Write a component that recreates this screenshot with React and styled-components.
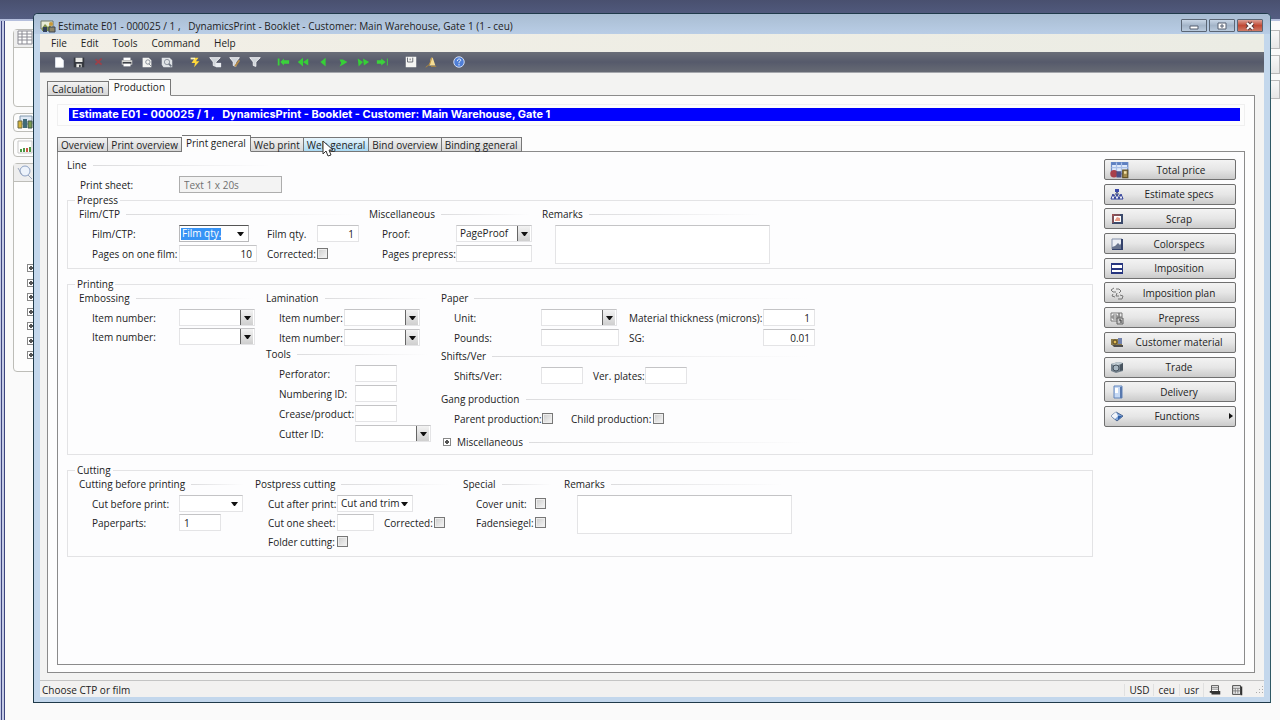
import React, { useId } from 'react';
import styled, { createGlobalStyle, css } from 'styled-components';

const MENUS = ['File', 'Edit', 'Tools', 'Command', 'Help'];

const TOOLS = [
  ['new', 'save', 'delete'],
  ['print', 'preview', 'find'],
  ['flash', 'filterSave', 'filterEdit', 'filter'],
  ['first', 'fastBack', 'back', 'forward', 'fastForward', 'last'],
  ['note', 'alert'],
  ['help'],
];

const ACTIONS = [
  ['Total price', 'price'],
  ['Estimate specs', 'tree'],
  ['Scrap', 'scrap'],
  ['Colorspecs', 'color'],
  ['Imposition', 'imposition'],
  ['Imposition plan', 'plan'],
  ['Prepress', 'prepress'],
  ['Customer material', 'material'],
  ['Trade', 'trade'],
  ['Delivery', 'delivery'],
  ['Functions', 'functions'],
];

const TABS = [
  'Overview',
  'Print overview',
  'Print general',
  'Web print',
  'Web general',
  'Bind overview',
  'Binding general',
];

const ICONS = {
  app: (
    <>
      <path d="M1 3h12v8H1z" fill="#e9ecd8" stroke="#6d7568" />
      <path d="M2 10l3-4 3 3 2-2 2 4v2H2z" fill="#7f8f4c" />
      <circle cx="11" cy="6" r="2" fill="#c79a3c" />
      <path d="M3 9h4v5H3z" fill="#33425c" />
      <path d="M9 9h6v5H9z" fill="#8d8468" stroke="#3d4654" />
    </>
  ),
  new: <path d="M4 3h6l3 3v8H4z" fill="#fff" stroke="#dfe5ee" />,
  save: (
    <>
      <path d="M2 3h12v11H2z" fill="#35383f" />
      <path d="M4 3h8v5H4zM5 10h6v4H5z" fill="#e9e9e6" />
      <path d="M8 11h2v3H8z" fill="#35383f" />
    </>
  ),
  delete: <path d="M4 5l7 6M11 4l-7 7" stroke="#9e4048" strokeWidth="2" />,
  print: (
    <>
      <path d="M4 3h8v3H4z" fill="#fff" />
      <path d="M2 6h12v5H2z" fill="#d6d6d2" />
      <path d="M3 8h10v2H3z" fill="#3e4148" />
      <path d="M4 10h8v3H4z" fill="#fff" />
    </>
  ),
  preview: (
    <>
      <path d="M3 3h7l3 3v8H3z" fill="#f4f4f2" />
      <circle cx="9" cy="8" r="2.5" fill="none" stroke="#7d848e" />
      <path d="M10 10l3 3" stroke="#7d848e" />
    </>
  ),
  find: (
    <>
      <path d="M2 3h9l3 3v8H4l-2-3z" fill="#dfe2e6" />
      <circle cx="8" cy="8" r="3" fill="none" stroke="#868d98" />
      <path d="M10 10l3 3" stroke="#6f7785" strokeWidth="2" />
    </>
  ),
  flash: (
    <>
      <path d="M8 3h4L9 7h4l-6 7 1-5H4z" fill="#ffd83a" />
      <path d="M3 4h5" stroke="#fff6bd" strokeWidth="2" />
    </>
  ),
  filter: <path d="M2 3h12l-5 5v5l-3-1V8z" fill="#cfd4da" stroke="#f3f4f6" />,
  filterSave: (
    <>
      <path d="M2 3h12l-5 5v5l-3-1V8z" fill="#cfd4da" stroke="#f3f4f6" />
      <path d="M9 9h6v5H9z" fill="#e9ecf1" />
    </>
  ),
  filterEdit: (
    <>
      <path d="M2 3h11l-4 5v5l-3-1V8z" fill="#cfd4da" stroke="#f3f4f6" />
      <path d="M13 6l-5 7" stroke="#b58b4a" strokeWidth="2" />
    </>
  ),
  first: (
    <>
      <path d="M3 4v8" stroke="#3bd23b" strokeWidth="2" />
      <path d="M5 8l4-4v2h6v4H9v2z" fill="#3bd23b" />
    </>
  ),
  fastBack: <path d="M8 3v10L2 8zM14 4v8L8 8z" fill="#36cf37" />,
  back: <path d="M11 3v10L5 8z" fill="#36cf37" />,
  forward: <path d="M4 5h4l5 3-5 3-4 2 2-4z" fill="#36cf37" />,
  fastForward: <path d="M2 4l6 4-5 5zM8 4l7 4-6 4z" fill="#36cf37" />,
  last: (
    <>
      <path d="M1 6h5V4l5 4-5 4v-2H1z" fill="#3bd23b" />
      <path d="M13 4v8" stroke="#3bd23b" />
    </>
  ),
  note: (
    <>
      <path d="M2 2h12v12H2z" fill="#f5f5f3" />
      <path d="M4 3v5h6V3M7 4v2" fill="none" stroke="#5b5f68" />
    </>
  ),
  alert: (
    <>
      <path d="M8 3h2l3 9H6z" fill="#f4dc94" />
      <path d="M6 12l3-9M2 14l5-4M8 13h6" stroke="#b28a3c" />
    </>
  ),
  help: (
    <>
      <circle cx="8" cy="8" r="6" fill="#4f7ed6" stroke="#dfe8fb" />
      <path
        d="M6 7c0-3 4-3 4-1 0 1-2 1-2 3M8 10v2"
        fill="none"
        stroke="#fff"
      />
    </>
  ),
  price: (
    <>
      <path d="M2 2h13v9H2z" fill="#dfe9fa" stroke="#6d8dca" />
      <path d="M2 3h13" stroke="#5d7fc0" strokeWidth="2" />
      <path d="M2 6h13M6 2v8M10 2v8" stroke="#a9c0e8" />
      <circle cx="4" cy="11" r="3" fill="#a8404a" />
      <path d="M6 9h4v5H6z" fill="#4a4f86" />
      <path d="M11 8h4v6h-4z" fill="#a48b4c" stroke="#64552b" />
      <path d="M12 9h2v2h-2z" fill="#f3e2a9" />
    </>
  ),
  tree: (
    <>
      <path d="M8 5v4M8 6l-3 4M8 6l3 4" stroke="#555e86" />
      <path d="M6 3h4v3H6z" fill="#3947a8" />
      <path
        d="M4 8l2 5H2zM8 8l2 5H6zM12 8l2 5h-4z"
        fill="#fff"
        stroke="#2b3a96"
      />
    </>
  ),
  scrap: (
    <>
      <path d="M4 4h9v8H4z" fill="#fff" stroke="#3c4a6b" strokeWidth="2" />
      <path d="M6 9l2-3 3 1v3H6z" fill="#e79b86" />
      <path d="M4 3v9M3 4h8" stroke="#c2564a" />
    </>
  ),
  color: (
    <>
      <path d="M3 3h10v10H3z" fill="#eceff5" stroke="#8390aa" />
      <path d="M3 13v-2l3-1 3-3 2 2 2-3v7z" fill="#68748e" />
      <path d="M12 3h2v11h-2zM3 13h11v1H3z" fill="#33416b" />
    </>
  ),
  imposition: (
    <>
      <path d="M2 3h12v11H2z" fill="#26357f" />
      <path d="M3 5h10v3H3zM3 10h10v2H3z" fill="#fff" />
    </>
  ),
  plan: (
    <path
      d="M5 3L2 5l2 2h3M7 4h3l2 2-2 2M4 9L3 11l3 1M8 8l-1 3h3M11 10l3 1-1 3h-4"
      fill="none"
      stroke="#777"
    />
  ),
  prepress: (
    <>
      <path d="M2 3h8v8H2z" fill="#f7f7f7" stroke="#777" />
      <path d="M4 5h4v4H4zM2 7h8M10 3h3v4h-3z" fill="none" stroke="#777" />
      <path d="M8 8h6v6H8z" fill="#c9c9c9" stroke="#606060" />
      <path d="M10 10h2v3" fill="none" stroke="#333" />
    </>
  ),
  material: (
    <>
      <path d="M2 5h11v6H2z" fill="#8b7a49" />
      <circle cx="6" cy="8" r="2" fill="#e2bb54" stroke="#56461f" />
      <path d="M9 4h4v6H9z" fill="#7282ad" />
      <path d="M3 11h11v2H5z" fill="#4d4d4d" />
    </>
  ),
  trade: (
    <>
      <path d="M2 5l7-2 5 1v8l-7 2-5-2z" fill="#75828d" />
      <path d="M2 5l5 2 7-3-5-1z" fill="#c0cbd2" />
      <path d="M11 6v6l3-1V4z" fill="#48545f" />
      <circle cx="7" cy="9" r="3" fill="#a9b8c3" stroke="#48545f" />
    </>
  ),
  delivery: (
    <>
      <path d="M5 2h8v12H5z" fill="#c6d9f4" stroke="#6184bb" />
      <path d="M11 3h2v11h-2z" fill="#5878ae" />
      <path d="M6 4h3v5H6z" fill="#fff" />
    </>
  ),
  functions: (
    <>
      <path d="M2 8l5-4 7 4-6 5z" fill="#7fa4d8" stroke="#4b6792" />
      <path d="M2 8l5-4 2 4-3 3z" fill="#f2f5fa" />
      <path d="M9 8h4l-4 4z" fill="#2f5fa8" />
    </>
  ),
  stack: (
    <>
      <path d="M4 3h8v8H4z" fill="#fff" stroke="#444" />
      <path d="M4 5h8M4 7h8" stroke="#777" />
      <path d="M2 10h12M4 12h10" stroke="#333" strokeWidth="2" />
    </>
  ),
  grid: (
    <>
      <path d="M3 3h9v10H3z" fill="#eee" stroke="#333" />
      <path d="M3 6h9M3 9h9M6 6v6M9 6v6" stroke="#777" />
      <path d="M13 4v10" stroke="#333" strokeWidth="2" />
    </>
  ),
};

const Icon = ({ name, size = 16 }) => (
  <svg width={size} height={size} viewBox="0 0 16 16" fill="none" aria-hidden>
    {ICONS[name]}
  </svg>
);

const Arrow = () => (
  <ArrowBox>
    <svg width="7" height="4" viewBox="0 0 7 4" aria-hidden>
      <path d="M0 0h7L4 4H3z" fill="#111" />
    </svg>
  </ArrowBox>
);

const TextField = ({ label, value, width, right, disabled }) => {
  const id = useId();
  return (
    <>
      <Label htmlFor={id}>{label}</Label>
      <Input
        id={id}
        defaultValue={value}
        disabled={disabled}
        $width={width}
        $right={right}
      />
    </>
  );
};

const SelectField = ({ label, value = '', width = 76, combo, active }) => {
  const id = useId();
  return (
    <>
      <Label htmlFor={id}>{label}</Label>
      <SelectBox $width={width} $combo={combo} $active={active}>
        <Select id={id} $active={active}>
          <option>{value}</option>
        </Select>
        <Arrow />
      </SelectBox>
    </>
  );
};

const CheckField = ({ label }) => {
  const id = useId();
  return (
    <>
      <Label htmlFor={id}>{label}</Label>
      <Check id={id} type="checkbox" />
    </>
  );
};

const Section = ({ title, tight, children }) => (
  <SectionBox>
    <SubHead>
      <span>{title}</span>
    </SubHead>
    <Rows $tight={tight}>{children}</Rows>
  </SectionBox>
);

const Remarks = () => {
  const id = useId();
  return (
    <SectionBox>
      <SubHead>
        <label htmlFor={id}>Remarks</label>
      </SubHead>
      <Rows>
        <TextArea id={id} />
      </Rows>
    </SectionBox>
  );
};

const PrepressGroup = () => (
  <Group>
    <Legend>Prepress</Legend>
    <Columns $cols="290px 173px 230px">
      <Section title="Film/CTP">
        <Row $cols="87px 88px 50px 42px">
          <SelectField label="Film/CTP:" value="Film qty." width={70} combo active />
          <TextField label="Film qty." value="1" width={42} right />
        </Row>
        <Row $cols="87px 88px 50px 42px">
          <TextField label="Pages on one film:" value="10" width={78} right />
          <CheckField label="Corrected:" />
        </Row>
      </Section>
      <Section title="Miscellaneous">
        <Row $cols="74px 76px">
          <SelectField label="Proof:" value="PageProof" />
        </Row>
        <Row $cols="74px 76px">
          <TextField label="Pages prepress:" width={76} />
        </Row>
      </Section>
      <Remarks />
    </Columns>
  </Group>
);

const PrintingGroup = () => (
  <Group>
    <Legend>Printing</Legend>
    <Columns $cols="187px 175px 380px">
      <Section title="Embossing" tight>
        <Row $cols="87px 76px">
          <SelectField label="Item number:" />
        </Row>
        <Row $cols="87px 76px">
          <SelectField label="Item number:" />
        </Row>
      </Section>
      <Stack $gap={2}>
        <Section title="Lamination">
          <Row $cols="65px 76px">
            <SelectField label="Item number:" />
          </Row>
          <Row $cols="65px 76px">
            <SelectField label="Item number:" />
          </Row>
        </Section>
        <Section title="Tools">
          <Row $cols="76px 76px">
            <TextField label="Perforator:" width={42} />
          </Row>
          <Row $cols="76px 76px">
            <TextField label="Numbering ID:" width={42} />
          </Row>
          <Row $cols="76px 76px">
            <TextField label="Crease/product:" width={42} />
          </Row>
          <Row $cols="76px 76px">
            <SelectField label="Cutter ID:" />
          </Row>
        </Section>
      </Stack>
      <Stack $gap={9}>
        <Stack $gap={4}>
          <Section title="Paper">
            <Row $cols="87px 88px 134px 52px">
              <SelectField label="Unit:" />
              <TextField
                label="Material thickness (microns):"
                value="1"
                width={52}
                right
              />
            </Row>
            <Row $cols="87px 88px 134px 52px">
              <TextField label="Pounds:" width={78} />
              <TextField label="SG:" value="0.01" width={52} right />
            </Row>
          </Section>
          <Section title="Shifts/Ver">
            <Row $cols="87px 52px 52px 42px">
              <TextField label="Shifts/Ver:" width={42} />
              <TextField label="Ver. plates:" width={42} />
            </Row>
          </Section>
        </Stack>
        <Section title="Gang production">
          <Row $cols="88px 29px 82px 42px">
            <CheckField label="Parent production:" />
            <CheckField label="Child production:" />
          </Row>
        </Section>
        <SubHead>
          <Expander type="button" aria-label="Expand">
            <PlusBox />
          </Expander>
          <span>Miscellaneous</span>
        </SubHead>
      </Stack>
    </Columns>
  </Group>
);

const CuttingGroup = () => (
  <Group>
    <Legend>Cutting</Legend>
    <Columns $cols="176px 208px 101px 230px">
      <Section title="Cutting before printing" tight>
        <Row $cols="87px 64px">
          <SelectField label="Cut before print:" width={64} combo />
        </Row>
        <Row $cols="87px 64px">
          <TextField label="Paperparts:" value="1" width={42} />
        </Row>
      </Section>
      <Section title="Postpress cutting" tight>
        <Row $cols="69px 76px">
          <SelectField label="Cut after print:" value="Cut and trim" combo />
        </Row>
        <Row $cols="69px 47px 50px 12px">
          <TextField label="Cut one sheet:" width={37} />
          <CheckField label="Corrected:" />
        </Row>
        <Row $cols="69px 12px">
          <CheckField label="Folder cutting:" />
        </Row>
      </Section>
      <Section title="Special" tight>
        <Row $cols="59px 12px">
          <CheckField label="Cover unit:" />
        </Row>
        <Row $cols="59px 12px">
          <CheckField label="Fadensiegel:" />
        </Row>
      </Section>
      <Remarks />
    </Columns>
  </Group>
);

const BackWindow = () => (
  <Back>
    <BackTop />
    <BackBody>
      <BackRail />
      <BackNav>
        <BackCard $height={78}>
          <BackCardHead>
            <svg width="16" height="16" viewBox="0 0 16 16" aria-hidden>
              <path
                d="M1 1h14v13H1zM1 4h14M1 7h14M1 10h14M5 1v13M10 1v13"
                fill="#fff"
                stroke="#8b8b94"
              />
            </svg>
          </BackCardHead>
        </BackCard>
        <BackCard $height={19}>
          <svg width="16" height="16" viewBox="0 0 16 16" aria-hidden>
            <path d="M3 2h12v8H3z" fill="#dfe9f5" stroke="#8298ad" />
            <path d="M1 7h4v7H1z" fill="#d7b43c" stroke="#6b6a45" />
            <path d="M6 5h4v9H6z" fill="#3f6a78" />
            <path d="M11 7h4v7h-4z" fill="#7a9a4e" stroke="#44584e" />
          </svg>
        </BackCard>
        <BackCard $height={19}>
          <svg width="16" height="16" viewBox="0 0 16 16" aria-hidden>
            <path d="M1 2h14v12H1z" fill="#fff" stroke="#c9c9c9" />
            <path d="M4 13v-3M7 13V9M13 13V8" stroke="#4d9a45" strokeWidth="2" />
            <path d="M10 13v-4" stroke="#c95846" strokeWidth="2" />
          </svg>
        </BackCard>
        <BackCard $height={209}>
          <BackCardHead>
            <svg width="16" height="16" viewBox="0 0 16 16" aria-hidden>
              <circle cx="8" cy="7" r="5" fill="#edf3fb" stroke="#8ea2c4" />
              <path d="M11 11l4 4M1 4l4 7" stroke="#9ba7bd" />
            </svg>
          </BackCardHead>
          <BackTree>
            {[1, 2, 3, 4, 5, 6, 7].map((n) => (
              <PlusBox key={n} />
            ))}
          </BackTree>
        </BackCard>
      </BackNav>
      <BackEdge>
        <BackButton />
        <BackButton />
        <BackButton />
      </BackEdge>
    </BackBody>
  </Back>
);

export default function App() {
  return (
    <Desktop>
      <GlobalStyle />
      <BackWindow />
      <Window>
        <TitleBar>
          <Icon name="app" />
          <Title>
            {
              'Estimate E01 - 000025 / 1 ,   DynamicsPrint - Booklet - Customer: Main Warehouse, Gate 1 (1 - ceu)'
            }
          </Title>
          <Caption type="button" aria-label="Minimize">
            <svg width="24" height="12" viewBox="0 0 24 12">
              <path d="M8 6h8v3H8z" fill="#fff" stroke="#555f70" />
            </svg>
          </Caption>
          <Caption type="button" aria-label="Maximize">
            <svg width="24" height="12" viewBox="0 0 24 12">
              <path d="M8 3h8v6H8z" fill="#fff" stroke="#555f70" />
              <path d="M11 5h2v2h-2z" fill="#fff" stroke="#555f70" />
            </svg>
          </Caption>
          <Caption type="button" aria-label="Close" $close>
            <svg width="24" height="12" viewBox="0 0 24 12">
              <path d="M9 3l6 6M15 3L9 9" stroke="#5a3a3a" strokeWidth="4" />
              <path d="M9 3l6 6M15 3L9 9" stroke="#fff" strokeWidth="2" />
            </svg>
          </Caption>
        </TitleBar>
        <MenuBar>
          {MENUS.map((menu) => (
            <MenuItem key={menu} type="button">
              {menu}
            </MenuItem>
          ))}
        </MenuBar>
        <ToolBar>
          {TOOLS.map((group) => (
            <ToolGroup key={group[0]}>
              {group.map((tool) => (
                <ToolButton key={tool} type="button" aria-label={tool}>
                  <Icon name={tool} size={14} />
                </ToolButton>
              ))}
            </ToolGroup>
          ))}
        </ToolBar>
        <Client>
          <TabStrip role="tablist">
            <Tab type="button" role="tab">
              Calculation
            </Tab>
            <Tab type="button" role="tab" $selected>
              Production
            </Tab>
          </TabStrip>
          <OuterPanel>
            <Banner>
              <BannerText>
                {
                  'Estimate E01 - 000025 / 1 ,   DynamicsPrint - Booklet - Customer: Main Warehouse, Gate 1'
                }
              </BannerText>
            </Banner>
            <TabStrip role="tablist">
              {TABS.map((tab) => (
                <Tab
                  key={tab}
                  type="button"
                  role="tab"
                  $narrow
                  $selected={tab === 'Print general'}
                  $hover={tab === 'Web general'}
                >
                  {tab}
                  {tab === 'Web general' && (
                    <Pointer width="12" height="18" viewBox="0 0 12 18">
                      <path
                        d="M1 1v13l3-3 2 5 3-1-2-5h4z"
                        fill="#fff"
                        stroke="#333"
                      />
                    </Pointer>
                  )}
                </Tab>
              ))}
            </TabStrip>
            <InnerPanel>
              <Form>
                <LineSection>
                  <Section title="Line">
                    <Row $cols="99px 103px">
                      <TextField
                        label="Print sheet:"
                        value="Text 1 x 20s"
                        width={103}
                        disabled
                      />
                    </Row>
                  </Section>
                </LineSection>
                <PrepressGroup />
                <PrintingGroup />
                <CuttingGroup />
              </Form>
              <Actions>
                {ACTIONS.map(([label, icon]) => (
                  <ActionButton key={label} type="button">
                    <Icon name={icon} size={icon === 'price' ? 20 : 16} />
                    <span>{label}</span>
                    {label === 'Functions' && (
                      <svg width="4" height="6" viewBox="0 0 4 6" aria-hidden>
                        <path d="M0 0l4 3-4 3z" fill="#111" />
                      </svg>
                    )}
                  </ActionButton>
                ))}
              </Actions>
            </InnerPanel>
          </OuterPanel>
        </Client>
        <StatusBar>
          <StatusText>Choose CTP or film</StatusText>
          <StatusCell>USD</StatusCell>
          <StatusCell>ceu</StatusCell>
          <StatusCell>usr</StatusCell>
          <StatusCell>
            <Icon name="stack" size={14} />
          </StatusCell>
          <StatusIcon>
            <Icon name="grid" size={14} />
          </StatusIcon>
          <svg width="8" height="8" viewBox="0 0 8 8" aria-hidden>
            <path
              d="M6 0h1v1H6zM3 3h1v1H3zM6 3h1v1H6zM0 6h1v1H0zM3 6h1v1H3zM6 6h1v1H6z"
              fill="#aaa"
            />
          </svg>
        </StatusBar>
      </Window>
    </Desktop>
  );
}

const GlobalStyle = createGlobalStyle`
  * {
    box-sizing: border-box;
  }
  body {
    margin: 0;
    background: #fafafa;
  }
  body, button, input, select, textarea {
    font-family: 'Open Sans', 'Noto Sans', sans-serif;
    font-size: 10px;
    line-height: 12px;
    color: #222;
  }
  svg {
    display: block;
    flex: none;
  }
`;

const Desktop = styled.div`
  position: relative;
  display: flex;
  min-height: 100vh;
`;

/* window behind */
const Back = styled.div`
  flex: 1;
  display: flex;
  flex-direction: column;
`;
const BackTop = styled.div`
  height: 21px;
  background: linear-gradient(#49506f, #545d82);
  border-bottom: 2px solid #b5bfdd;
`;
const BackBody = styled.div`
  flex: 1;
  display: flex;
  background: #fafafa;
`;
const BackRail = styled.div`
  width: 5px;
  background: linear-gradient(
    90deg,
    #c5cbe6 1px,
    #3e4680 1px 2px,
    #c5cbe6 2px 4px,
    #3e4680 4px
  );
`;
const BackNav = styled.div`
  width: 36px;
  padding: 8px 0 0 8px;
  display: flex;
  flex-direction: column;
  gap: 6px;
`;
const BackCard = styled.div`
  height: ${(props) => props.$height}px;
  padding-left: 3px;
  background: #fdfdfd;
  border: 1px solid #bdbdb8;
  border-radius: 4px;
`;
const BackCardHead = styled.div`
  height: 18px;
  margin-left: -3px;
  padding-left: 3px;
  background: #eee;
  border-bottom: 1px solid #bdbdb8;
`;
const BackTree = styled.div`
  display: flex;
  flex-direction: column;
  justify-content: space-between;
  height: 177px;
  padding: 82px 0 0 10px;
`;
const BackEdge = styled.div`
  flex: 1;
  display: flex;
  flex-direction: column;
  gap: 6px;
  padding-top: 9px;
`;
const BackButton = styled.div`
  height: 19px;
  background: linear-gradient(#f8f8f8, #e6e6e6);
  border: 1px solid #b9b9b9;
`;
const PlusBox = styled.span`
  display: block;
  width: 8px;
  height: 8px;
  border: 1px solid #888;
  background:
    linear-gradient(#555, #555) center / 4px 2px no-repeat,
    linear-gradient(#555, #555) center / 2px 4px no-repeat,
    #fff;
`;

/* main window */
const Window = styled.main`
  position: absolute;
  top: 13px;
  right: 9px;
  bottom: 17px;
  left: 33px;
  display: flex;
  flex-direction: column;
  padding: 0 6px 5px;
  background: #c3d7ec;
  border: 1px solid #1f3a4a;
  border-right-color: #2f5965;
  border-radius: 5px 5px 0 0;
`;
const TitleBar = styled.header`
  display: flex;
  align-items: center;
  gap: 2px;
  height: 20px;
  margin: 0 -6px;
  padding: 3px 7px 0 6px;
  background: linear-gradient(#a9bdd2, #b9cde6);
  border-radius: 4px 4px 0 0;
`;
const Title = styled.div`
  flex: 1;
  white-space: pre;
`;
const Caption = styled.button`
  width: 26px;
  height: 13px;
  padding: 0;
  border: 1px solid #5b6675;
  border-radius: 1px;
  background: ${(props) =>
    props.$close
      ? 'linear-gradient(#dba095, #c14a35 50%, #cf7a66)'
      : 'linear-gradient(#c8d6e6, #a3b4c8 50%, #b9cadd)'};
`;
const MenuBar = styled.nav`
  display: flex;
  height: 18px;
  padding-left: 4px;
  background: linear-gradient(90deg, #f2efe6, #ebece4);
`;
const MenuItem = styled.button`
  padding: 0 7px;
  border: 0;
  background: none;
`;
const ToolBar = styled.div`
  display: flex;
  gap: 8px;
  height: 21px;
  padding-left: 9px;
  background: linear-gradient(#6a6e78, #565a6b 50%, #666a74);
  border-bottom: 1px solid #a5a7ad;
`;
const ToolGroup = styled.div`
  display: flex;
`;
const ToolButton = styled.button`
  display: flex;
  align-items: center;
  justify-content: center;
  width: 20px;
  padding: 0;
  border: 0;
  background: none;
`;
const Client = styled.section`
  flex: 1;
  display: flex;
  flex-direction: column;
  padding: 6px 9px 7px 7px;
  background: #f3f3f2;
`;
const TabStrip = styled.div`
  display: flex;
  align-items: flex-end;
  height: 17px;
  margin-bottom: -1px;
`;
const Tab = styled.button`
  position: relative;
  height: 15px;
  padding: 0 ${(props) => (props.$narrow ? 3 : 4)}px;
  border: 1px solid #777;
  background: linear-gradient(#f3f3f3, #d6d6d6);

  & + & {
    border-left: 0;
  }

  ${(props) =>
    props.$hover &&
    css`
      background: linear-gradient(#e9f6fd, #a9d9f3);
    `}

  ${(props) =>
    props.$selected &&
    css`
      height: 17px;
      padding: 0 ${props.$narrow ? 4 : 5}px 2px;
      background: #fdfdfd;
      border-bottom-color: #fdfdfd;
      z-index: 1;
    `}
`;
const Pointer = styled.svg`
  position: absolute;
  top: 2px;
  left: 18px;
  z-index: 2;
`;
const OuterPanel = styled.div`
  flex: 1;
  display: flex;
  flex-direction: column;
  padding: 8px 9px 7px;
  background: #fdfdfd;
  border: 1px solid #8b8b8b;
`;
const Banner = styled.div`
  margin-bottom: 9px;
  padding: 3px 4px 4px 11px;
  border: 1px solid #f0f0f0;
`;
const BannerText = styled.h1`
  margin: 0;
  padding-left: 3px;
  background: #0000fe;
  color: #fff;
  font: bold 11px/13px Inter, Arial, sans-serif;
  white-space: pre;
`;
const InnerPanel = styled.div`
  flex: 1;
  display: flex;
  justify-content: space-between;
  gap: 11px;
  padding: 7px 8px 0 9px;
  background: #fdfdfe;
  border: 1px solid #8b8b8b;
`;
const Form = styled.form`
  flex: 1;
  display: flex;
  flex-direction: column;
`;
const LineSection = styled.div`
  width: 216px;
  margin-bottom: 1px;
`;
const Group = styled.fieldset`
  min-width: 0;
  margin: 0 0 9px;
  padding: 2px 0 6px 11px;
  border: 1px solid #e3e3e5;
`;
const Legend = styled.legend`
  margin-left: -4px;
  padding: 0 2px;
`;
const Columns = styled.div`
  display: grid;
  grid-template-columns: ${(props) => props.$cols};
`;
const Stack = styled.div`
  display: flex;
  flex-direction: column;
  gap: ${(props) => props.$gap}px;
`;
const SectionBox = styled.div``;
const SubHead = styled.div`
  display: flex;
  align-items: center;
  gap: 6px;
  height: 12px;
  padding-right: 12px;

  &::after {
    content: '';
    flex: 1;
    height: 1px;
    background: linear-gradient(90deg, #dcdcde, #fdfdfe);
  }
`;
const Expander = styled.button`
  padding: 0 0 0 2px;
  border: 0;
  background: none;
`;
const Rows = styled.div`
  display: flex;
  flex-direction: column;
  gap: ${(props) => (props.$tight ? 2 : 3)}px;
  padding: 5px 0 0 13px;
`;
const Row = styled.div`
  display: grid;
  grid-template-columns: ${(props) => props.$cols};
  align-items: center;
  height: 17px;
`;
const Label = styled.label`
  white-space: nowrap;
`;
const field = css`
  border: 1px solid #e4e4e6;
  border-top-color: #c4c4c6;
  background: #fff;
`;
const Input = styled.input`
  ${field}
  width: ${(props) => props.$width}px;
  height: 17px;
  padding: 0 4px;
  text-align: ${(props) => (props.$right ? 'right' : 'left')};

  &:disabled {
    border-color: #adadad;
    background: #f3f3f3;
    color: #707070;
  }
`;
const TextArea = styled.textarea`
  ${field}
  display: block;
  width: 215px;
  height: 39px;
  margin-bottom: -2px;
  resize: none;
`;
const ArrowBox = styled.span`
  display: flex;
  align-items: center;
  justify-content: center;
  grid-area: 1 / 2;
  pointer-events: none;
`;
const SelectBox = styled.span`
  ${field}
  display: grid;
  grid-template: 15px / 1fr 13px;
  width: ${(props) => props.$width}px;
  padding-right: 1px;

  ${(props) =>
    props.$active &&
    css`
      border-color: #b9b9bb;
      border-top-color: #555;
    `}

  ${(props) =>
    !props.$combo &&
    css`
      ${ArrowBox} {
        border-left: 1px solid #666;
        background: linear-gradient(#f3f3f3, #cfcfcf);
      }
    `}
`;
const Select = styled.select`
  grid-area: 1 / 1 / 2 / 3;
  min-width: 0;
  height: 15px;
  padding: 0 0 0 3px;
  border: 0;
  appearance: none;
  background: none;
  outline: none;
  line-height: 15px;

  ${(props) =>
    props.$active &&
    css`
      padding-left: 2px;
      color: #fff;
      background: linear-gradient(#3793f5, #3793f5) 1px 2px / 40px 12px no-repeat;
    `}
`;
const Check = styled.input`
  appearance: none;
  width: 11px;
  height: 11px;
  margin: 0;
  border: 1px solid #777;
  background: linear-gradient(135deg, #ccc, #f6f6f6);
  box-shadow: inset 0 0 0 1px #eee;
`;
const Actions = styled.div`
  display: flex;
  flex-direction: column;
  justify-content: space-between;
  width: 132px;
  height: 268px;
`;
const ActionButton = styled.button`
  display: flex;
  align-items: center;
  height: 21px;
  padding: 0 2px 0 4px;
  border: 1px solid #707070;
  border-radius: 2px;
  background: linear-gradient(#f3f3f3, #e6e6e6 50%, #cbcbcb);

  span {
    flex: 1;
    text-align: center;
  }
`;
const StatusBar = styled.footer`
  display: flex;
  align-items: center;
  height: 17px;
  padding: 1px 0 0 2px;
  border-top: 1px solid #c4c4c4;
  background: #f2f1f0;
`;
const StatusText = styled.div`
  flex: 1;
`;
const StatusCell = styled.div`
  padding: 0 4px;
  border-left: 1px solid #e0e0e0;
`;
const StatusIcon = styled.div`
  padding: 0 12px 0 4px;
`;
